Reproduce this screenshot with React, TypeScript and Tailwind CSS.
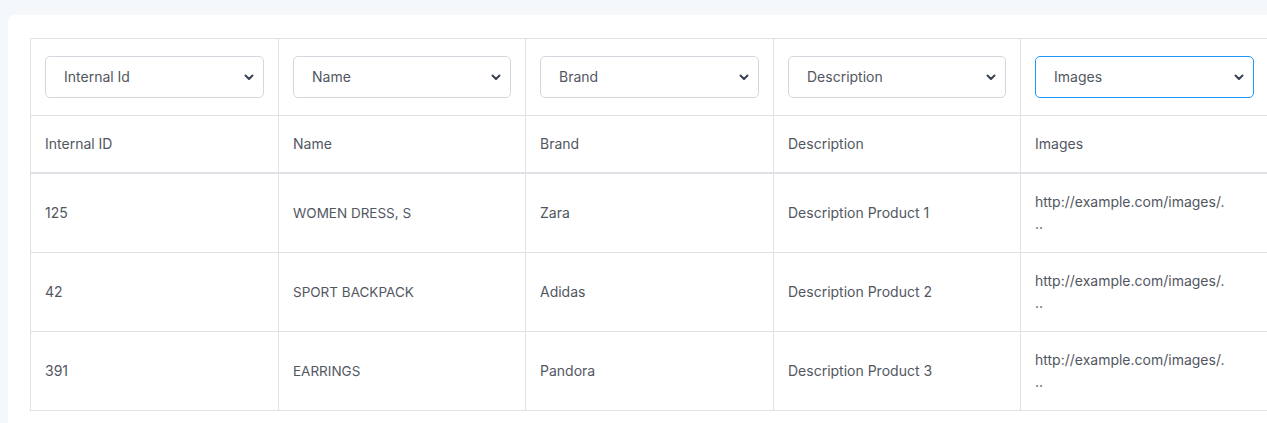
import { useState } from "react";

const columns = ["Internal Id", "Name", "Brand", "Description", "Images"];
const headers = ["Internal ID", "Name", "Brand", "Description", "Images"];

const rows = [
  { id: "125", name: "WOMEN DRESS, S", brand: "Zara", description: "Description Product 1", images: "http://example.com/images/..." },
  { id: "42", name: "SPORT BACKPACK", brand: "Adidas", description: "Description Product 2", images: "http://example.com/images/..." },
  { id: "391", name: "EARRINGS", brand: "Pandora", description: "Description Product 3", images: "http://example.com/images/..." },
];

function Chevron() {
  return (
    <svg
      className="pointer-events-none absolute right-[9px] top-1/2 -translate-y-1/2"
      width="12"
      height="12"
      viewBox="0 0 12 12"
      fill="none"
    >
      <path d="M2.5 4.5 6 8l3.5-3.5" stroke="#374151" strokeWidth="2" strokeLinecap="round" strokeLinejoin="round" />
    </svg>
  );
}

function App() {
  const [mapping, setMapping] = useState(columns);

  return (
    <div
      className="min-h-[423px] bg-[#f5f8fb] pl-2 pt-[15px] text-[#52575f]"
      style={{ fontFamily: "Inter, 'Noto Sans', sans-serif" }}
    >
      <div className="h-[408px] overflow-hidden rounded-tl-md bg-white pl-[22px] pt-[23px]">
        <table className="w-[1238px] table-fixed border-collapse text-[14px] leading-[22px]">
          <colgroup>
            <col className="w-[248px]" />
            <col className="w-[247px]" />
            <col className="w-[248px]" />
            <col className="w-[247px]" />
            <col className="w-[248px]" />
          </colgroup>
          <thead>
            <tr>
              {mapping.map((value, i) => (
                <th key={i} className="border border-[#dee2e6] px-[14px] py-[17px] font-normal">
                  <div className="relative">
                    <select
                      value={value}
                      onChange={(e) => {
                        const next = [...mapping];
                        next[i] = e.target.value;
                        setMapping(next);
                      }}
                      className={
                        i === 4
                          ? "h-[42px] w-full appearance-none rounded-[5px] border border-[#2196f3] bg-white pl-[18px] text-[14px] text-[#52575f] outline-none"
                          : "h-[42px] w-full appearance-none rounded-[5px] border border-[#d4d8de] bg-white pl-[18px] text-[14px] text-[#52575f] outline-none"
                      }
                    >
                      {columns.map((c) => (
                        <option key={c} value={c}>
                          {c}
                        </option>
                      ))}
                    </select>
                    <Chevron />
                  </div>
                </th>
              ))}
            </tr>
            <tr>
              {headers.map((h) => (
                <th
                  key={h}
                  className="border border-b-2 border-[#dee2e6] px-[14px] py-[17px] text-left font-normal"
                >
                  {h}
                </th>
              ))}
            </tr>
          </thead>
          <tbody>
            {rows.map((r) => (
              <tr key={r.id}>
                <td className="border border-[#dee2e6] px-[14px] py-[17px]">{r.id}</td>
                <td className="border border-[#dee2e6] px-[14px] py-[17px] text-[13.5px]">{r.name}</td>
                <td className="border border-[#dee2e6] px-[14px] py-[17px]">{r.brand}</td>
                <td className="border border-[#dee2e6] px-[14px] py-[17px]">{r.description}</td>
                <td className="border border-[#dee2e6] px-[14px] py-[17px]">
                  <span className="block">{r.images.slice(0, -2)}</span>
                  <span className="block">{r.images.slice(-2)}</span>
                </td>
              </tr>
            ))}
          </tbody>
        </table>
      </div>
    </div>
  );
}

export default App;
